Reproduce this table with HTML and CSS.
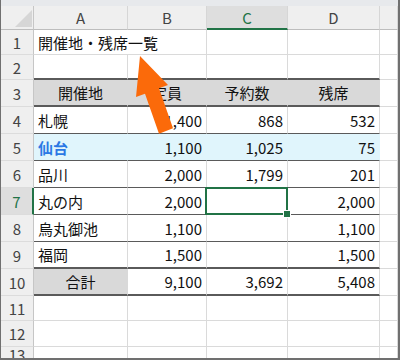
FILE: index.html
```html
<!DOCTYPE html>
<html lang="ja">
<head>
<meta charset="utf-8">
<title>開催地・残席一覧</title>
<link rel="stylesheet" href="styles.css">
</head>
<body>
<div class="sheet">
  <div class="topbar"></div>
  <div class="grid">
    <div class="corner"><svg width="33" height="24" viewBox="0 0 33 24"><polygon points="14,21 31,4 31,21" fill="#d6d6d6"/></svg></div>
    <div class="ch">A</div>
    <div class="ch">B</div>
    <div class="ch sel">C</div>
    <div class="ch">D</div>
    <div class="ch"></div>

    <div class="rh">1</div>
    <div class="c title">開催地・残席一覧</div>
    <div class="c"></div>
    <div class="c"></div>
    <div class="c"></div>

    <div class="rh">2</div>
    <div class="c tb2"></div>
    <div class="c tb2"></div>
    <div class="c tb2"></div>
    <div class="c tb2"></div>
    <div class="c"></div>

    <div class="rh">3</div>
    <div class="c hd">開催地</div>
    <div class="c hd">定員</div>
    <div class="c hd">予約数</div>
    <div class="c hd">残席</div>
    <div class="c"></div>

    <div class="rh">4</div>
    <div class="c bd">札幌</div>
    <div class="c bd num">1,400</div>
    <div class="c bd num">868</div>
    <div class="c bd num">532</div>
    <div class="c"></div>

    <div class="rh">5</div>
    <div class="c bd hl blue">仙台</div>
    <div class="c bd hl num">1,100</div>
    <div class="c bd hl num">1,025</div>
    <div class="c bd hl num">75</div>
    <div class="c"></div>

    <div class="rh">6</div>
    <div class="c bd">品川</div>
    <div class="c bd num">2,000</div>
    <div class="c bd num">1,799</div>
    <div class="c bd num">201</div>
    <div class="c"></div>

    <div class="rh sel">7</div>
    <div class="c bd">丸の内</div>
    <div class="c bd num">2,000</div>
    <div class="c bd num active"><span class="selbox"><span class="handle"></span></span></div>
    <div class="c bd num">2,000</div>
    <div class="c"></div>

    <div class="rh">8</div>
    <div class="c bd">烏丸御池</div>
    <div class="c bd num">1,100</div>
    <div class="c bd num"></div>
    <div class="c bd num">1,100</div>
    <div class="c"></div>

    <div class="rh">9</div>
    <div class="c bd2">福岡</div>
    <div class="c bd2 num">1,500</div>
    <div class="c bd2 num"></div>
    <div class="c bd2 num">1,500</div>
    <div class="c"></div>

    <div class="rh">10</div>
    <div class="c bd2 total">合計</div>
    <div class="c bd2 num">9,100</div>
    <div class="c bd2 num">3,692</div>
    <div class="c bd2 num">5,408</div>
    <div class="c"></div>

    <div class="rh">11</div>
    <div class="c"></div><div class="c"></div><div class="c"></div><div class="c"></div><div class="c"></div>

    <div class="rh">12</div>
    <div class="c"></div><div class="c"></div><div class="c"></div><div class="c"></div><div class="c"></div>

    <div class="rh">13</div>
    <div class="c"></div><div class="c"></div><div class="c"></div><div class="c"></div><div class="c"></div>
  </div>
  <svg class="arrow" width="400" height="360" viewBox="0 0 400 360">
    <polygon points="140,56 168,85 159,88.3 173,128.3 159,133.7 145,93.7 136,97" fill="#fb6a0a"/>
  </svg>
</div>
</body>
</html>
```
FILE: styles.css
```css
* {
  box-sizing: border-box;
  margin: 0;
  padding: 0;
}

html,
body {
  width: 400px;
  height: 360px;
  overflow: hidden;
  background: #fff;
}

body {
  font-family: "Noto Sans CJK JP", "Noto Sans", sans-serif;
  font-size: 15px;
  color: #111;
}

.sheet {
  position: relative;
  width: 400px;
  height: 360px;
  border-left: 1px solid #707070;
  border-right: 2px solid #707070;
  border-bottom: 2px solid #707070;
  display: flex;
  flex-direction: column;
  overflow: hidden;
}

.topbar {
  flex: none;
  height: 6px;
  background: #e7e9ec;
}

.grid {
  flex: 1;
  display: grid;
  grid-template-columns: 33px 94px 79px 81px 92px 1fr;
  grid-template-rows: 24px 25px 25px repeat(8, 27px) 25px 26px 1fr;
}

.corner {
  background: #efefef;
  border-right: 1px solid #c6c6c6;
  border-bottom: 1px solid #bdbdbd;
}

.corner svg {
  display: block;
}

.ch {
  display: flex;
  align-items: center;
  justify-content: center;
  background: #efefef;
  color: #444;
  border-right: 1px solid #d6d6d6;
  border-bottom: 1px solid #bdbdbd;
  line-height: 1;
}

.ch.sel {
  background: #dedede;
  color: #217346;
  border-bottom: 2px solid #217346;
}

.rh {
  display: flex;
  align-items: center;
  justify-content: center;
  background: #efefef;
  color: #444;
  border-right: 1px solid #c6c6c6;
  border-bottom: 1px solid #dcdcdc;
  line-height: 1;
}

.rh.sel {
  background: #dedede;
  color: #217346;
  border-right: 2px solid #217346;
}

.c {
  display: flex;
  align-items: center;
  padding: 0 4px;
  white-space: nowrap;
  line-height: 1;
  border-right: 1px solid #dadada;
  border-bottom: 1px solid #dadada;
}

.title {
  grid-column: span 2;
}

.num {
  justify-content: flex-end;
  padding-right: 4px;
}

.tb2 {
  border-bottom: 2px solid #5a5a5a;
}

.hd {
  justify-content: center;
  background: #d9d9d9;
  border-right-color: #d9d9d9;
  border-bottom: 2px solid #5a5a5a;
}

.bd {
  border-bottom: 1px solid #5a5a5a;
}

.bd2 {
  border-bottom: 2px solid #5a5a5a;
}

.hl {
  background: #e0f5fc;
  border-right-color: #e0f5fc;
}

.blue {
  color: #2b78e4;
  font-weight: bold;
}

.total {
  justify-content: center;
  background: #d9d9d9;
  border-right-color: #d9d9d9;
}

.active {
  position: relative;
}

.selbox {
  position: absolute;
  left: -2px;
  top: -1px;
  width: calc(100% + 3px);
  height: calc(100% + 2px);
  border: 2px solid #217346;
}

.handle {
  position: absolute;
  right: -4px;
  bottom: -4px;
  width: 6px;
  height: 6px;
  background: #217346;
  outline: 1px solid #fff;
}

.arrow {
  position: absolute;
  left: -1px;
  top: 0;
  pointer-events: none;
}
```
